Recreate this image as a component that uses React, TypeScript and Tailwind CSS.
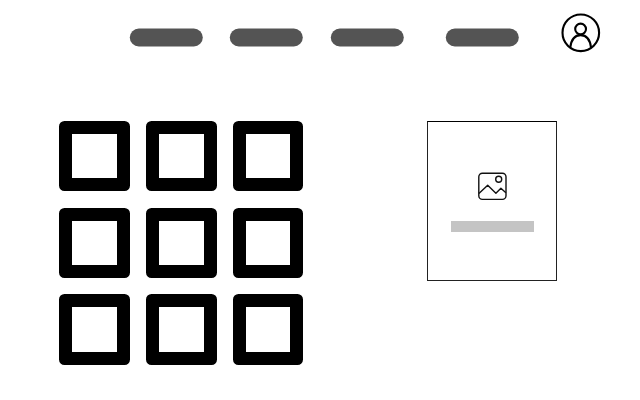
import React from 'react';

function Pill({ className = '' }: { className?: string }) {
  return <div className={`h-[18px] w-[73px] shrink-0 rounded-full bg-[#545454] ${className}`} />;
}

function UserIcon() {
  return (
    <svg className="h-10 w-10 shrink-0" viewBox="0 0 40 40" fill="none" stroke="#000" strokeWidth="2.1">
      <circle cx="19.8" cy="19.8" r="18.3" />
      <circle cx="19.6" cy="16" r="5.4" />
      <path d="M9.2 34.8C10.2 26.5 14.2 22.1 19.6 22.1S29.1 26.5 30.1 34.8" />
    </svg>
  );
}

function ImageIcon() {
  return (
    <svg className="h-[30px] w-[30px] shrink-0" viewBox="0 0 30 30" fill="none" stroke="#111" strokeWidth="1.4">
      <rect x="1.8" y="2.2" width="27.2" height="26.2" rx="3.6" />
      <circle cx="21.7" cy="8.3" r="3" />
      <path d="M1.9 22.5L10.7 14.2L18.9 22.2L23.9 17.2L28.9 21.8" strokeLinejoin="round" />
    </svg>
  );
}

export default function App() {
  return (
    <div className="h-[400px] w-[640px] overflow-hidden bg-white">
      <header className="flex h-[121px] items-start pt-[13px] pl-[130px]">
        <nav className="flex translate-x-[-0.2px] translate-y-[0.5px] pt-[15px]">
          <Pill />
          <Pill className="ml-[27.4px]" />
          <Pill className="ml-[27.8px]" />
          <Pill className="ml-[41.6px]" />
        </nav>
        <div className="ml-[42.2px]">
          <UserIcon />
        </div>
      </header>
      <main className="flex items-start pl-[59.4px]">
        <div className="grid auto-rows-[70.4px] grid-cols-[70.4px_70.4px_70.4px] gap-x-[16.4px] gap-y-[16.3px]">
          {Array.from({ length: 9 }, (_, i) => (
            <div key={i} className="rounded-[5.5px] border-[13px] border-black bg-white" />
          ))}
        </div>
        <aside className="ml-[123.6px] flex h-40 w-[130px] flex-col items-center border border-[#222] border-t-black pt-[49px]">
          <ImageIcon />
          <div className="mt-5 ml-px h-[11px] w-[83px] bg-[#c4c4c4]" />
        </aside>
      </main>
    </div>
  );
}
